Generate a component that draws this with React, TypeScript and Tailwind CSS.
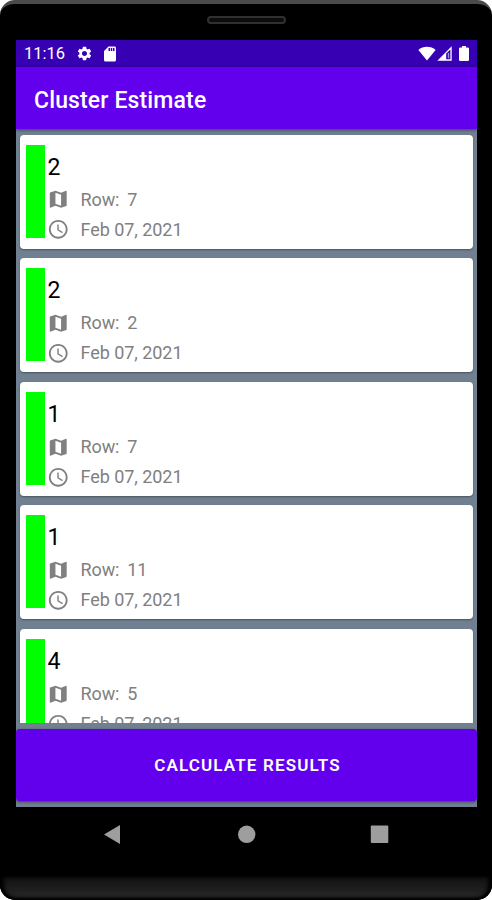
import { MdAccessTime, MdMap, MdSdCard, MdSettings } from "react-icons/md"

const clusters = [
    { id: 1, count: 2, row: 7, date: "Feb 07, 2021" },
    { id: 2, count: 2, row: 2, date: "Feb 07, 2021" },
    { id: 3, count: 1, row: 7, date: "Feb 07, 2021" },
    { id: 4, count: 1, row: 11, date: "Feb 07, 2021" },
    { id: 5, count: 4, row: 5, date: "Feb 07, 2021" },
]

type Cluster = (typeof clusters)[number]

function StatusBar() {
    return (
        <div className="flex h-[27px] shrink-0 items-center bg-[#3700b3] pl-[8px] pr-[8px] text-white">
            <span className="w-[52px] pt-[2px] text-[16.5px] leading-none">11:16</span>
            <MdSettings className="size-[17px]" />
            <MdSdCard className="ml-[8px] size-[18px]" />
            <div className="ml-auto flex items-center">
                <svg className="h-[15px] w-[18px]" viewBox="0 0 18 15" fill="currentColor">
                    <path d="M9 14.5.4 4.1C2.8 1.9 5.7.8 9 .8s6.2 1.1 8.6 3.3z" />
                </svg>
                <svg className="ml-px h-[15px] w-[15px]" viewBox="0 0 15 15" fill="currentColor">
                    <path d="M.3 14.7 14.7.3v14.4z" />
                    <path d="M9.2 7.6 13.4 3.4v9.8H9.2z" fill="#3700b3" />
                    <path d="M10.8 7h1.4v5.2h-1.4z" opacity="0.55" />
                </svg>
                <svg className="ml-[7px] h-[15px] w-[10px]" viewBox="0 0 10 15" fill="currentColor">
                    <path d="M3 0h4v1.5h1.8q1.2 0 1.2 1.2v11.1q0 1.2-1.2 1.2H1.2Q0 15 0 13.8V2.7q0-1.2 1.2-1.2H3z" />
                </svg>
            </div>
        </div>
    )
}

function ClusterCard({ cluster }: { cluster: Cluster }) {
    return (
        <div className="flex h-[114px] shrink-0 rounded-[4px] bg-white pl-[6px] pt-[10px] shadow-[0_1px_2px_rgba(0,0,0,0.35)]">
            <div className="h-[93px] w-[19px] bg-[#00ff00]" />
            <div className="flex flex-col pl-[2px] text-[#808080]">
                <span className="h-[40px] pl-[0.5px] pt-[9px] text-[23px] leading-[27px] text-black">{cluster.count}</span>
                <div className="flex h-[30px] items-center">
                    <MdMap className="mr-[11px] size-[22.5px]" />
                    <span className="flex gap-[8px] text-[18px] leading-none tracking-[-0.1px]">
                        <span>Row:</span>
                        <span>{cluster.row}</span>
                    </span>
                </div>
                <div className="flex h-[30px] items-center">
                    <MdAccessTime className="mr-[11px] size-[22.5px]" />
                    <span className="text-[18px] leading-none tracking-[-0.05px]">{cluster.date}</span>
                </div>
            </div>
        </div>
    )
}

function NavBar() {
    return (
        <div className="flex h-[69px] shrink-0 justify-between px-[103px] pt-[17.5px] text-[#9e9e9e]">
            <svg className="size-[19px]" viewBox="0 0 19 19" fill="currentColor">
                <path d="M17 0v19L1 9.5z" />
            </svg>
            <svg className="size-[19px]" viewBox="0 0 19 19" fill="currentColor">
                <circle cx="9.7" cy="9.3" r="8.7" />
            </svg>
            <svg className="size-[19px]" viewBox="0 0 19 19" fill="currentColor">
                <rect x="0.8" y="0.5" width="17.5" height="17.5" rx="1" />
            </svg>
        </div>
    )
}

export default function App() {
    return (
        <div className="h-[900px] w-[492px] bg-white font-['Roboto',sans-serif]">
            <div className="flex h-[900px] flex-col overflow-hidden rounded-[15px] border-t-[4px] border-[#4a4a4a] bg-black">
                <div className="flex h-[36px] shrink-0 justify-center pt-[12px]">
                    <div className="h-[8px] w-[79px] rounded-full border-2 border-[#303030] bg-[#0c0c0c]" />
                </div>
                <div className="ml-[16px] flex h-[767px] w-[461px] shrink-0 flex-col bg-[#708090]">
                    <StatusBar />
                    <header className="flex h-[62px] shrink-0 items-center bg-[#6200ee] pl-[18px] pt-[4px] shadow-[0_1px_3px_rgba(0,0,0,0.5)]">
                        <h1 className="text-[23px] font-medium leading-none tracking-[0.14px] text-white">Cluster Estimate</h1>
                    </header>
                    <main className="flex h-[593.5px] shrink-0 flex-col gap-[9.65px] overflow-hidden px-[4px] pt-[5.5px]">
                        {clusters.map((cluster) => (
                            <ClusterCard key={cluster.id} cluster={cluster} />
                        ))}
                    </main>
                    <button className="mt-[6px] h-[72px] shrink-0 rounded-[4px] bg-[#6200ee] pl-[2px] pt-[2px] text-[17px] font-semibold tracking-[1.15px] text-white shadow-[0_1px_3px_rgba(0,0,0,0.5)]">
                        CALCULATE RESULTS
                    </button>
                </div>
                <NavBar />
                <div className="h-[24px] shrink-0 rounded-b-[15px] bg-linear-to-b from-[#111] to-[#292929] shadow-[inset_0_-2px_3px_#000,inset_4px_0_4px_#000,inset_-4px_0_4px_#000]" />
            </div>
        </div>
    )
}
